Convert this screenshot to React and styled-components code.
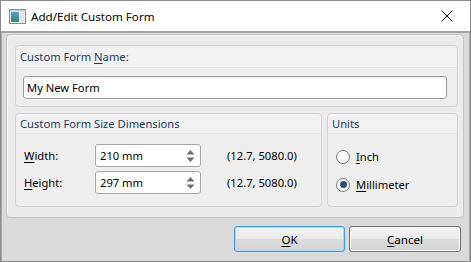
import React from "react";
import styled, { createGlobalStyle } from "styled-components";

const Global = createGlobalStyle`
  html, body { margin: 0; padding: 0; }
  body { width: 471px; height: 262px; overflow: hidden; font-family: "Segoe UI", "Noto Sans", "Liberation Sans", sans-serif; font-size: 11.2px; }
  * { box-sizing: border-box; }
`;

const Window = styled.div`
  width: 471px;
  height: 262px;
  border: 1px solid #8a8a8a;
  display: flex;
  flex-direction: column;
  background: #fff;
`;

const TitleBar = styled.div`
  height: 30px;
  flex: none;
  display: flex;
  align-items: center;
  padding-left: 8px;
  background: #fff;
  color: #000;
`;

const TitleText = styled.span`
  margin-left: 5px;
  font-size: 11.6px;
  flex: 1;
`;

const CloseBtn = styled.div`
  width: 46px;
  height: 30px;
  display: flex;
  align-items: center;
  justify-content: center;
`;

const Client = styled.div`
  flex: 1;
  display: flex;
  flex-direction: column;
  background: #dadada;
  border-top: 2px solid #a4a4a4;
  border-left: 1px solid #a9a9a9;
  border-right: 1px solid #a9a9a9;
  padding: 1px 5px 0 4px;
`;

const Panel = styled.div`
  height: 184px;
  background: #ebebeb;
  border: 1px solid #c4c4c4;
  border-radius: 4px;
  padding: 10px 5px 11px 8px;
  display: flex;
  flex-direction: column;
  gap: 6px;
  box-shadow: inset 1px 1px 0 #f8f8f8;
`;

const Group = styled.div`
  background: #eeeeee;
  border: 1px solid #d2d2d2;
  border-radius: 4px;
  display: flex;
  flex-direction: column;
  flex: ${(p) => p.$flex || "none"};
  width: ${(p) => (p.$w ? p.$w + "px" : "auto")};
`;

const GroupHeader = styled.div`
  height: ${(p) => p.$h}px;
  flex: none;
  display: flex;
  align-items: center;
  padding-left: 4px;
  color: #1e3867;
  background: #f1f1f1;
  border-bottom: 1px solid #e2e2e2;
  border-radius: 4px 4px 0 0;
`;

const GroupBody = styled.div`
  padding: ${(p) => p.$pad};
  display: flex;
  flex-direction: column;
  gap: 4px;
`;

const TextInput = styled.div`
  height: 23px;
  background: #fff;
  border: 1px solid #9c9c9c;
  border-radius: 3px;
  box-shadow: inset 0 1px 1px rgba(0,0,0,0.08), 0 1px 0 #f8f8f8;
  display: flex;
  align-items: center;
  padding-left: 3px;
  color: #000;
`;

const Row2 = styled.div`
  display: flex;
  gap: 5px;
  flex: 1;
`;

const FieldRow = styled.div`
  height: 23px;
  display: flex;
  align-items: center;
`;

const Label = styled.span`
  width: 71px;
  color: #000;
`;

const Spin = styled.div`
  width: 106px;
  height: 23px;
  background: #fff;
  border: 1px solid #a6a6a6;
  border-radius: 3px;
  display: flex;
  align-items: center;
  padding: 0 5px 0 4px;
  justify-content: space-between;
`;

const Range = styled.span`
  margin-left: 26px;
  color: #000;
`;

const RadioRow = styled.div`
  height: 23px;
  display: flex;
  align-items: center;
  gap: 6px;
  margin-bottom: ${(p) => p.$mb || 0}px;
`;

const Circle = styled.span`
  width: 14px;
  height: 14px;
  border-radius: 50%;
  border: 1px solid #7d7d7d;
  background: radial-gradient(circle at 50% 40%, #ffffff 40%, #e6e6e6 100%);
  display: flex;
  align-items: center;
  justify-content: center;
`;

const Dot = styled.span`
  width: 7px;
  height: 7px;
  border-radius: 50%;
  background: #2d4d72;
`;

const Buttons = styled.div`
  flex: 1;
  display: flex;
  justify-content: flex-end;
  align-items: flex-start;
  gap: 4px;
  padding: 8px 3px 0 0;
`;

const Button = styled.div`
  width: ${(p) => p.$w}px;
  height: 26px;
  border-radius: 3px;
  border: 1px solid ${(p) => (p.$def ? "#3f9ae0" : "#707070")};
  background: linear-gradient(#f4f4f4, #e9e9e9 50%, #dcdcdc 51%, #d4d4d4);
  box-shadow: ${(p) => (p.$def ? "inset 0 0 0 1px #a9d8f8" : "inset 0 0 0 1px #fbfbfb")};
  display: flex;
  align-items: center;
  justify-content: center;
  color: #000;
  font-size: 11.6px;
`;

const U = styled.u`
  text-decoration-thickness: 1px;
  text-underline-offset: 2px;
`;

const AppIcon = () => (
  <svg width="17" height="15" viewBox="0 0 17 15">
    <defs>
      <linearGradient id="ig" x1="0" y1="0" x2="0" y2="1">
        <stop offset="0" stopColor="#5aa0c8" />
        <stop offset="1" stopColor="#2f8a6a" />
      </linearGradient>
    </defs>
    <rect x="0.5" y="0.5" width="16" height="14" fill="#f4f4f4" stroke="#8c8c8c" />
    <rect x="2" y="3" width="8" height="10" fill="url(#ig)" />
    <rect x="11" y="3" width="4" height="10" fill="#dfe6e8" />
    <rect x="1" y="1" width="15" height="1.5" fill="#cfcfcf" />
  </svg>
);

const Arrows = () => (
  <svg width="9" height="14" viewBox="0 0 9 14">
    <path d="M4.5 1 L8.5 5.5 L0.5 5.5 Z" fill="#6e6e6e" />
    <path d="M4.5 13 L8.5 8.5 L0.5 8.5 Z" fill="#6e6e6e" />
  </svg>
);

export default function App() {
  return (
    <>
      <Global />
      <Window>
        <TitleBar>
          <AppIcon />
          <TitleText>Add/Edit Custom Form</TitleText>
          <CloseBtn>
            <svg width="12" height="12" viewBox="0 0 12 12">
              <path d="M0.5 0.5 L11.5 11.5 M11.5 0.5 L0.5 11.5" stroke="#111" strokeWidth="1" />
            </svg>
          </CloseBtn>
        </TitleBar>
        <Client>
          <Panel>
            <Group>
              <GroupHeader $h={22}>
                <span>Custom Form <U>N</U>ame:</span>
              </GroupHeader>
              <GroupBody $pad="8px 10px 7px 7px">
                <TextInput>My New Form</TextInput>
              </GroupBody>
            </Group>
            <Row2>
              <Group $flex="1">
                <GroupHeader $h={20}>Custom Form Size Dimensions</GroupHeader>
                <GroupBody $pad="10px 8px 10px 8px">
                  <FieldRow>
                    <Label><U>W</U>idth:</Label>
                    <Spin>
                      <span>210 mm</span>
                      <Arrows />
                    </Spin>
                    <Range>(12.7, 5080.0)</Range>
                  </FieldRow>
                  <FieldRow>
                    <Label><U>H</U>eight:</Label>
                    <Spin>
                      <span>297 mm</span>
                      <Arrows />
                    </Spin>
                    <Range>(12.7, 5080.0)</Range>
                  </FieldRow>
                </GroupBody>
              </Group>
              <Group $w={131}>
                <GroupHeader $h={20}>Units</GroupHeader>
                <GroupBody $pad="11px 8px 10px 8px">
                  <RadioRow $mb={1}>
                    <Circle />
                    <span><U>I</U>nch</span>
                  </RadioRow>
                  <RadioRow>
                    <Circle><Dot /></Circle>
                    <span><U>M</U>illimeter</span>
                  </RadioRow>
                </GroupBody>
              </Group>
            </Row2>
          </Panel>
          <Buttons>
            <Button $w={111} $def><span><U>O</U>K</span></Button>
            <Button $w={112}><span><U>C</U>ancel</span></Button>
          </Buttons>
        </Client>
      </Window>
    </>
  );
}
